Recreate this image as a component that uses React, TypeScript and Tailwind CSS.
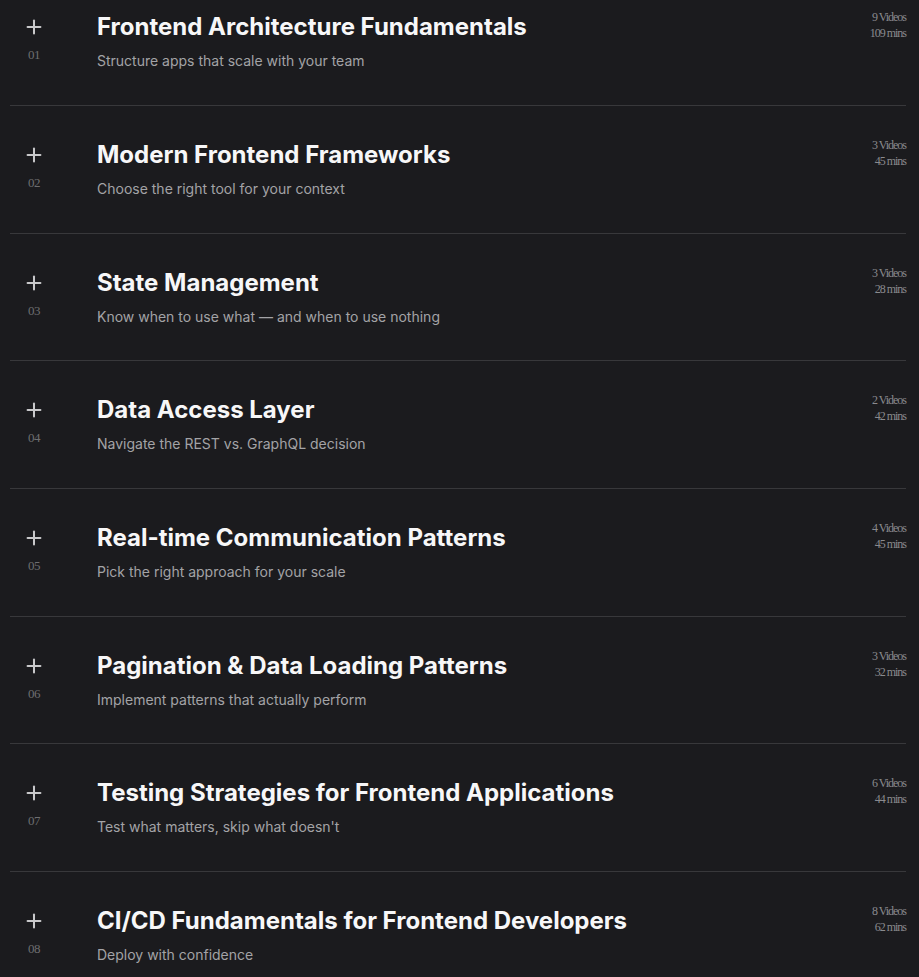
import { Plus } from "lucide-react";

interface Module {
  title: string;
  blurb: string;
  videos: number;
  mins: number;
}

const modules: Module[] = [
  { title: "Frontend Architecture Fundamentals", blurb: "Structure apps that scale with your team", videos: 9, mins: 109 },
  { title: "Modern Frontend Frameworks", blurb: "Choose the right tool for your context", videos: 3, mins: 45 },
  { title: "State Management", blurb: "Know when to use what — and when to use nothing", videos: 3, mins: 28 },
  { title: "Data Access Layer", blurb: "Navigate the REST vs. GraphQL decision", videos: 2, mins: 42 },
  { title: "Real-time Communication Patterns", blurb: "Pick the right approach for your scale", videos: 4, mins: 45 },
  { title: "Pagination & Data Loading Patterns", blurb: "Implement patterns that actually perform", videos: 3, mins: 32 },
  { title: "Testing Strategies for Frontend Applications", blurb: "Test what matters, skip what doesn't", videos: 6, mins: 44 },
  { title: "CI/CD Fundamentals for Frontend Developers", blurb: "Deploy with confidence", videos: 8, mins: 62 },
];

const serif = { fontFamily: '"Liberation Serif", "Times New Roman", serif' };

const ModuleRow = ({ mod, index }: { mod: Module; index: number }) => {
  const num = String(index + 1).padStart(2, "0");
  return (
    <div className="flex items-start border-b border-[#38383b] pt-[33px] pb-[33.67px]">
      {/* Expand toggle + module number */}
      <div className="flex w-[48px] shrink-0 flex-col items-center">
        <div className="flex h-[32px] items-center">
          <Plus size={22} strokeWidth={2.2} className="text-[#c9c9cb]" />
        </div>
        <span
          className="mt-[4px] text-[13px] leading-4 tracking-[-0.5px] text-[#6e6e70]"
          style={serif}
        >
          {num}
        </span>
      </div>

      {/* Title and summary */}
      <div className="ml-[39px] flex min-w-0 flex-1 flex-col gap-2">
        <h3 className="text-[24px] font-bold leading-8 text-[#f7f7f8]">
          {mod.title}
        </h3>
        <p className="text-[14px] leading-5 text-[#a3a3a6]">{mod.blurb}</p>
      </div>

      {/* Video count and runtime */}
      <div
        className="-mt-[2px] flex flex-col items-end text-[12px] leading-4 tracking-[-1px] text-[#8a8a8e]"
        style={serif}
      >
        <span>{mod.videos} Videos</span>
        <span>{mod.mins} mins</span>
      </div>
    </div>
  );
};

export default function App() {
  return (
    <div
      className="h-[977px] w-full overflow-hidden bg-[#1b1b1e]"
      style={{ fontFamily: 'Inter, "Noto Sans", sans-serif' }}
    >
      <div className="-mt-[21.67px] ml-[10px] mr-[13px]">
        {modules.map((mod, i) => (
          <ModuleRow key={mod.title} mod={mod} index={i} />
        ))}
      </div>
    </div>
  );
}
